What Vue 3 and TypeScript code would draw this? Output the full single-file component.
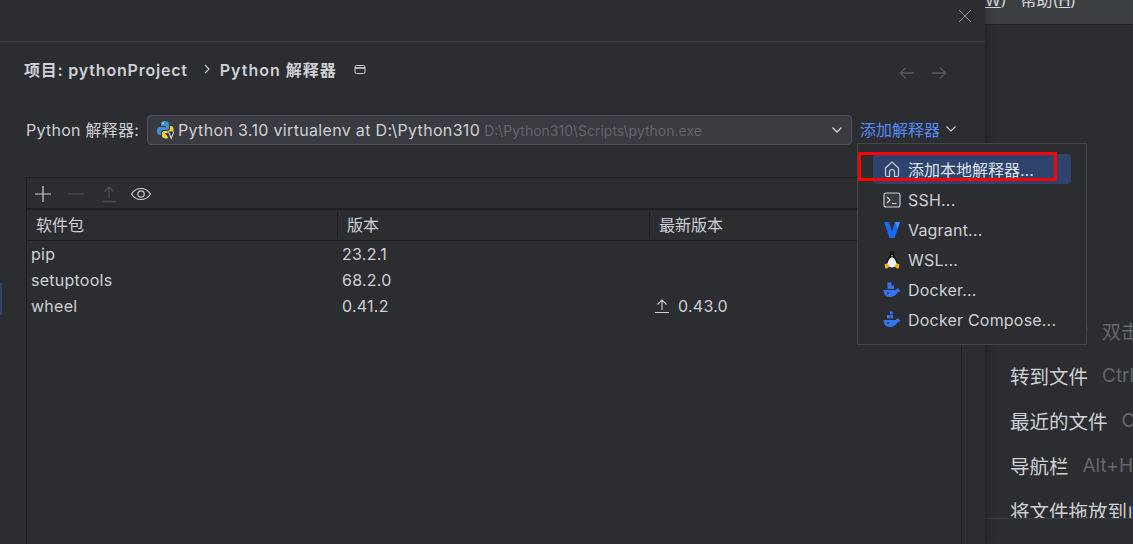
<script setup lang="ts">
interface Pkg { name: string; version: string; latest?: string }
const packages: Pkg[] = [
  { name: 'pip', version: '23.2.1' },
  { name: 'setuptools', version: '68.2.0' },
  { name: 'wheel', version: '0.41.2', latest: '0.43.0' },
]
const hints = [
  { label: '转到文件', key: 'Ctrl+Shift+N' },
  { label: '最近的文件', key: 'Ctrl+E' },
  { label: '导航栏', key: 'Alt+Home' },
]
</script>

<template>
  <div class="page">
    <section class="dialog">
      <header class="dialog-head">
        <svg class="close" width="14" height="14" viewBox="0 0 14 14"><path d="M1 1l12 12M13 1L1 13" stroke="#8c8f94" stroke-width="1" fill="none" /></svg>
      </header>
      <div class="marker"></div>
      <div class="crumbs">
        <span class="crumb">项目: pythonProject</span>
        <svg class="crumb-sep" width="8" height="10" viewBox="0 0 8 10"><path d="M2 1l4 4-4 4" stroke="#ced0d6" stroke-width="1.1" fill="none" /></svg>
        <span class="crumb second">Python 解释器</span>
        <svg class="win" width="12" height="11" viewBox="0 0 12 11"><rect x="1" y="1.5" width="10" height="8" rx="1.5" stroke="#ced0d6" fill="none" /><path d="M1 4h10" stroke="#ced0d6" stroke-width="1.6" /></svg>
        <div class="nav">
          <svg width="16" height="14" viewBox="0 0 16 14"><path d="M15 7H1.5M7 1.5L1.5 7 7 12.500" stroke="#55585d" stroke-width="1.3" fill="none" /></svg>
          <svg width="16" height="14" viewBox="0 0 16 14"><path d="M1 7h13.500M9 1.500L14.500 7 9 12.500" stroke="#55585d" stroke-width="1.3" fill="none" /></svg>
        </div>
      </div>
      <div class="interp-row">
        <label class="interp-label">Python 解释器:</label>
        <div class="combo">
          <svg class="py" width="20" height="20" viewBox="0 0 20 20">
            <path d="M9 1C5.500 1 5 2.500 5 4v2h5v1H3.500C1.800 7 1 8.500 1 10.500S1.800 15 3.500 15H5v-2.500C5 11 6 10 7.500 10H11c1.200 0 2-1 2-2V4c0-1.800-1.500-3-4-3z" fill="#3f8fd0" />
            <path d="M14 6v2.500c0 1.500-1 2.500-2.500 2.500H8c-1.200 0-2 1-2 2v3c0 1.500 1.500 2.500 4 2.500 1.200 0 1.800-.1 2.200-.4L10 14H9v-1h5.500c1.500 0 3-.8 3-3.500S16.500 6 15 6z" fill="#f5cf3a" />
            <circle cx="7.200" cy="3.400" r=".8" fill="#fff" />
            <path d="M11.500 11.500l3 7.500h1.200l3-7.500" fill="#2b2d30" />
            <path d="M12.500 11.500l2.700 6.800 2.700-6.800" stroke="#dfe1e5" stroke-width="1.100" fill="none" />
          </svg>
          <span class="combo-name">Python 3.10 virtualenv at D:\Python310</span>
          <span class="combo-path">D:\Python310\Scripts\python.exe</span>
          <svg class="combo-arrow" width="12" height="8" viewBox="0 0 12 8"><path d="M1.500 1.500L6 6l4.500-4.500" stroke="#ced0d6" stroke-width="1.300" fill="none" /></svg>
        </div>
        <span class="add-link">添加解释器</span>
        <svg class="link-arrow" width="12" height="8" viewBox="0 0 12 8"><path d="M1.500 1.500L6 6l4.500-4.500" stroke="#ced0d6" stroke-width="1.200" fill="none" /></svg>
      </div>
      <div class="table">
        <div class="toolbar">
          <svg width="18" height="18" viewBox="0 0 18 18"><path d="M9 1v16M1 9h16" stroke="#ced0d6" stroke-width="1.200" /></svg>
          <svg width="18" height="18" viewBox="0 0 18 18"><path d="M1 9h16" stroke="#4b4d52" stroke-width="1.200" /></svg>
          <svg width="18" height="18" viewBox="0 0 18 18"><path d="M9 13V2M4.500 6.500L9 2l4.500 4.500M2 16.500h14" stroke="#4b4d52" stroke-width="1.300" fill="none" /></svg>
          <svg class="eye" width="22" height="18" viewBox="0 0 22 18"><path d="M1.500 9C4 5 7 3.500 11 3.500S18 5 20.500 9C18 13 15 14.500 11 14.500S4 13 1.500 9z" stroke="#ced0d6" stroke-width="1.200" fill="none" /><circle cx="11" cy="9" r="3.200" stroke="#ced0d6" stroke-width="1.200" fill="none" /></svg>
        </div>
        <div class="cols head-row">
          <div class="cell first">软件包</div>
          <div class="cell">版本</div>
          <div class="cell last">最新版本</div>
        </div>
        <div class="rows">
          <div v-for="p in packages" :key="p.name" class="cols row">
            <div class="cell-b first">{{ p.name }}</div>
            <div class="cell-b">{{ p.version }}</div>
            <div class="cell-b latest">
              <template v-if="p.latest">
                <svg width="16" height="16" viewBox="0 0 16 16"><path d="M8 12V2M3.500 6.500L8 2l4.500 4.500M1 14.500h14" stroke="#ced0d6" stroke-width="1.100" fill="none" /></svg>
                {{ p.latest }}
              </template>
            </div>
          </div>
        </div>
      </div>
    </section>

    <aside class="side">
      <div class="menubar"><span class="menu-item cut"><u>W</u>)</span><span class="menu-item">帮助(<u>H</u>)</span></div>
      <div class="hints">
        <div class="hint"><span class="hint-label">随处搜索</span><span class="hint-key">双击 Shift</span></div>
        <div v-for="h in hints" :key="h.label" class="hint">
          <span class="hint-label">{{ h.label }}</span><span class="hint-key">{{ h.key }}</span>
        </div>
        <div class="hint"><span class="hint-label">将文件拖放到此处</span></div>
      </div>
      <div class="side-foot"></div>
    </aside>

    <div class="popup">
      <div class="item sel">
        <svg width="18" height="18" viewBox="0 0 18 18"><path d="M2.500 8L9 2l6.500 6v7a1.500 1.500 0 0 1-1.500 1.500h-2.500V12a2.500 2.500 0 0 0-5 0v4.500H4A1.500 1.500 0 0 1 2.500 15z" stroke="#ced0d6" stroke-width="1.200" fill="none" /></svg>
        <span>添加本地解释器...</span>
      </div>
      <div class="item">
        <svg width="18" height="18" viewBox="0 0 18 18"><rect x="1" y="2" width="16" height="14" rx="2" fill="#393b40" stroke="#ced0d6" stroke-width="1.100" /><path d="M4 6l3 3-3 3M9 12.500h4.500" stroke="#dfe1e5" stroke-width="1.100" fill="none" /></svg>
        <span>SSH...</span>
      </div>
      <div class="item">
        <svg width="18" height="18" viewBox="0 0 18 18"><path d="M1 1h5l3 9 3-9h5L11.500 17h-5z" fill="#1868f2" /><path d="M12 1h5l-2.500 7.500z" fill="#3f8ff5" /></svg>
        <span>Vagrant...</span>
      </div>
      <div class="item">
        <svg width="18" height="18" viewBox="0 0 18 18"><path d="M9 .5C7 .5 6.300 2 6.300 4 6.300 6.500 3 9 3 12.500c0 2.500 2.500 4.500 6 4.500s6-2 6-4.500c0-3.500-3.300-6-3.300-8.500C11.700 2 11 .5 9 .5z" fill="#16171a" /><path d="M9 6C6.500 7.500 4.600 10 4.600 12.500 4.600 15 6.500 16.500 9 16.500s4.400-1.500 4.400-4C13.400 10 11.500 7.500 9 6z" fill="#f4f4f4" /><path d="M1.500 13.500l3-1.500 2 3.500L4 17.500H2.500zM16.500 13.500l-3-1.500-2 3.500 2.500 2h1.500z" fill="#f4b320" /><path d="M7.800 4.200h2.400L9 5.800z" fill="#f4b320" /></svg>
        <span>WSL...</span>
      </div>
      <div class="item">
        <svg width="18" height="18" viewBox="0 0 18 18"><path d="M4.500 1.500h4v3h2.500v3.500H4.500z" fill="#3574f0" /><path d="M.5 9h12.500c.5-1.500 1.500-1.800 2-1.500 1 .3 1 1 1 1.300l1.500.5c-.7 1.400-1.800 1.700-2.800 1.700C13.500 13.500 11 16 6.500 16 2.500 16 .5 13 .5 9z" fill="#3574f0" /><circle cx="5" cy="12" r=".9" fill="#2b2d30" /></svg>
        <span>Docker...</span>
      </div>
      <div class="item">
        <svg width="18" height="18" viewBox="0 0 18 18"><path d="M7 .5h2.800v2.800H7zM4 4h2.800v3.500H4zM7.300 4h2.800v3.500H7.300z" fill="#3574f0" /><path d="M.5 9h12.500c.5-1.500 1.500-1.800 2-1.500 1 .3 1 1 1 1.300l1.500.5c-.7 1.400-1.800 1.700-2.800 1.700C13.500 13.500 11 16 6.500 16 2.500 16 .5 13 .5 9z" fill="#3574f0" /><circle cx="5" cy="12" r=".9" fill="#2b2d30" /></svg>
        <span>Docker Compose...</span>
      </div>
    </div>
    <div class="annot"></div>
  </div>
</template>

<style scoped>
.page {
  position: relative;
  width: 1133px;
  height: 544px;
  overflow: hidden;
  display: flex;
  background: #2b2d30;
  font-family: Inter, "Noto Sans CJK SC", sans-serif;
  color: #dfe1e5;
}
.dialog {
  position: relative;
  width: 985px;
  flex: none;
  display: flex;
  flex-direction: column;
  background: #2b2d30;
  box-shadow: 2px 0 8px rgba(0, 0, 0, 0.25);
  z-index: 1;
}
.dialog-head {
  height: 41px;
  flex: none;
  box-sizing: content-box;
  border-bottom: 1px solid #3c3e42;
  display: flex;
  justify-content: flex-end;
  align-items: flex-start;
  padding: 9px 13px 0 0;
  margin-top: -9px;
}
.close { margin-top: 9px; }
.marker {
  position: absolute;
  left: 0;
  top: 283px;
  width: 2px;
  height: 32px;
  background: #2e436e;
}
.crumbs {
  display: flex;
  align-items: center;
  height: 24px;
  margin-top: 15px;
  padding-left: 24px;
}
.crumb {
  font-size: 16px;
  font-weight: 600;
  letter-spacing: 0.8px;
  color: #ced0d6;
}
.crumb.second { letter-spacing: 1px; }
.crumb-sep { margin: 0 9px 0 15px; }
.win { margin-left: 17px; }
.nav {
  display: flex;
  gap: 16px;
  margin-left: auto;
  margin-right: 38px;
  margin-top: 8px;
}
.interp-row {
  display: flex;
  align-items: center;
  height: 30px;
  margin-top: 34px;
  padding-left: 26px;
  font-size: 16px;
}
.interp-label {
  width: 121px;
  flex: none;
  color: #ced0d6;
  letter-spacing: 0.25px;
  margin-bottom: 2px;
}
.combo {
  width: 705px;
  height: 30px;
  flex: none;
  box-sizing: border-box;
  background: #393b40;
  border: 1px solid #4e5157;
  border-radius: 4px;
  display: flex;
  align-items: center;
  padding-left: 8px;
  color: #ced0d6;
  white-space: nowrap;
}
.py { flex: none; margin-right: 2px; }
.combo-name { font-size: 16px; letter-spacing: 0.33px; }
.combo-path {
  font-size: 14px;
  color: #62656b;
  margin-left: 4px;
}
.combo-arrow { margin-left: auto; margin-right: 8px; }
.add-link {
  margin-left: 8px;
  margin-bottom: 2px;
  color: #548af7;
  font-size: 16px;
}
.link-arrow { margin-left: 5px; margin-bottom: 2px; }
.table {
  flex: 1;
  margin: 32px 23px 0 26px;
  border: 1px solid #1e1f22;
  border-bottom: none;
  display: flex;
  flex-direction: column;
  min-height: 0;
}
.toolbar {
  height: 29px;
  padding-top: 1px;
  flex: none;
  display: flex;
  align-items: center;
  gap: 15px;
  padding-left: 7px;
  border-bottom: 2px solid #1e1f22;
}
.eye { margin-left: -3px; }
.cols {
  display: grid;
  grid-template-columns: 311px 312px 1fr;
}
.head-row {
  height: 30px;
  flex: none;
  border-bottom: 1px solid #1e1f22;
  align-items: center;
  font-size: 16px;
  color: #ced0d6;
}
.cell {
  height: 27px;
  line-height: 27px;
  padding-left: 9px;
  border-right: 1px solid #1e1f22;
}
.cell.last { border-right: none; }
.row {
  height: 26px;
  align-items: center;
  font-size: 16px;
  letter-spacing: 0.25px;
  color: #ced0d6;
}
.cell-b { padding-left: 4px; }
.latest {
  display: flex;
  align-items: center;
  gap: 8px;
}
.side {
  flex: 1;
  display: flex;
  flex-direction: column;
  min-width: 0;
  background: #2b2d30;
  position: relative;
}
.menubar {
  height: 24px;
  flex: none;
  background: #3c3f41;
  border-bottom: 1px solid #232427;
  display: flex;
  font-size: 16px;
  line-height: 12px;
  color: #d5d7da;
  overflow: hidden;
  white-space: nowrap;
}
.menu-item { margin-top: -6px; padding-left: 14px; }
.menu-item.cut { padding-left: 0; }
.hints {
  position: relative;
  height: 493px;
  flex: none;
  overflow: hidden;
  padding: 283px 0 0 25px;
  box-sizing: border-box;
  white-space: nowrap;
  font-family: "Liberation Serif", "Noto Sans CJK SC", serif;
}
.hint {
  height: 45px;
  display: flex;
  align-items: center;
  gap: 14px;
  font-size: 19.500px;
  color: #cfd1d4;
}
.hint-key {
  font-family: Inter, "Noto Sans CJK SC", sans-serif;
  font-size: 19px;
  color: #63666b;
}
.side-foot {
  flex: 1;
  border-top: 1px solid #3a3c40;
}
.popup {
  position: absolute;
  left: 857px;
  top: 143px;
  width: 230px;
  height: 202px;
  box-sizing: border-box;
  padding-top: 11px;
  background: #2b2d30;
  border: 1px solid #43454a;
  z-index: 2;
  font-size: 16px;
  letter-spacing: 0.2px;
  color: #ced0d6;
}
.item {
  height: 30px;
  margin: 0 15px;
  padding-left: 10px;
  display: flex;
  align-items: center;
  gap: 7px;
  border-radius: 4px;
  white-space: nowrap;
}
.item svg { flex: none; }
.item.sel {
  background: #2e436e;
  color: #dfe1e5;
  margin-top: -1px;
  margin-bottom: 1px;
  letter-spacing: 0;
}
.annot {
  position: absolute;
  left: 858px;
  top: 152px;
  width: 199px;
  height: 29px;
  box-sizing: border-box;
  border: 3px solid #ff0000;
  z-index: 3;
}
</style>
